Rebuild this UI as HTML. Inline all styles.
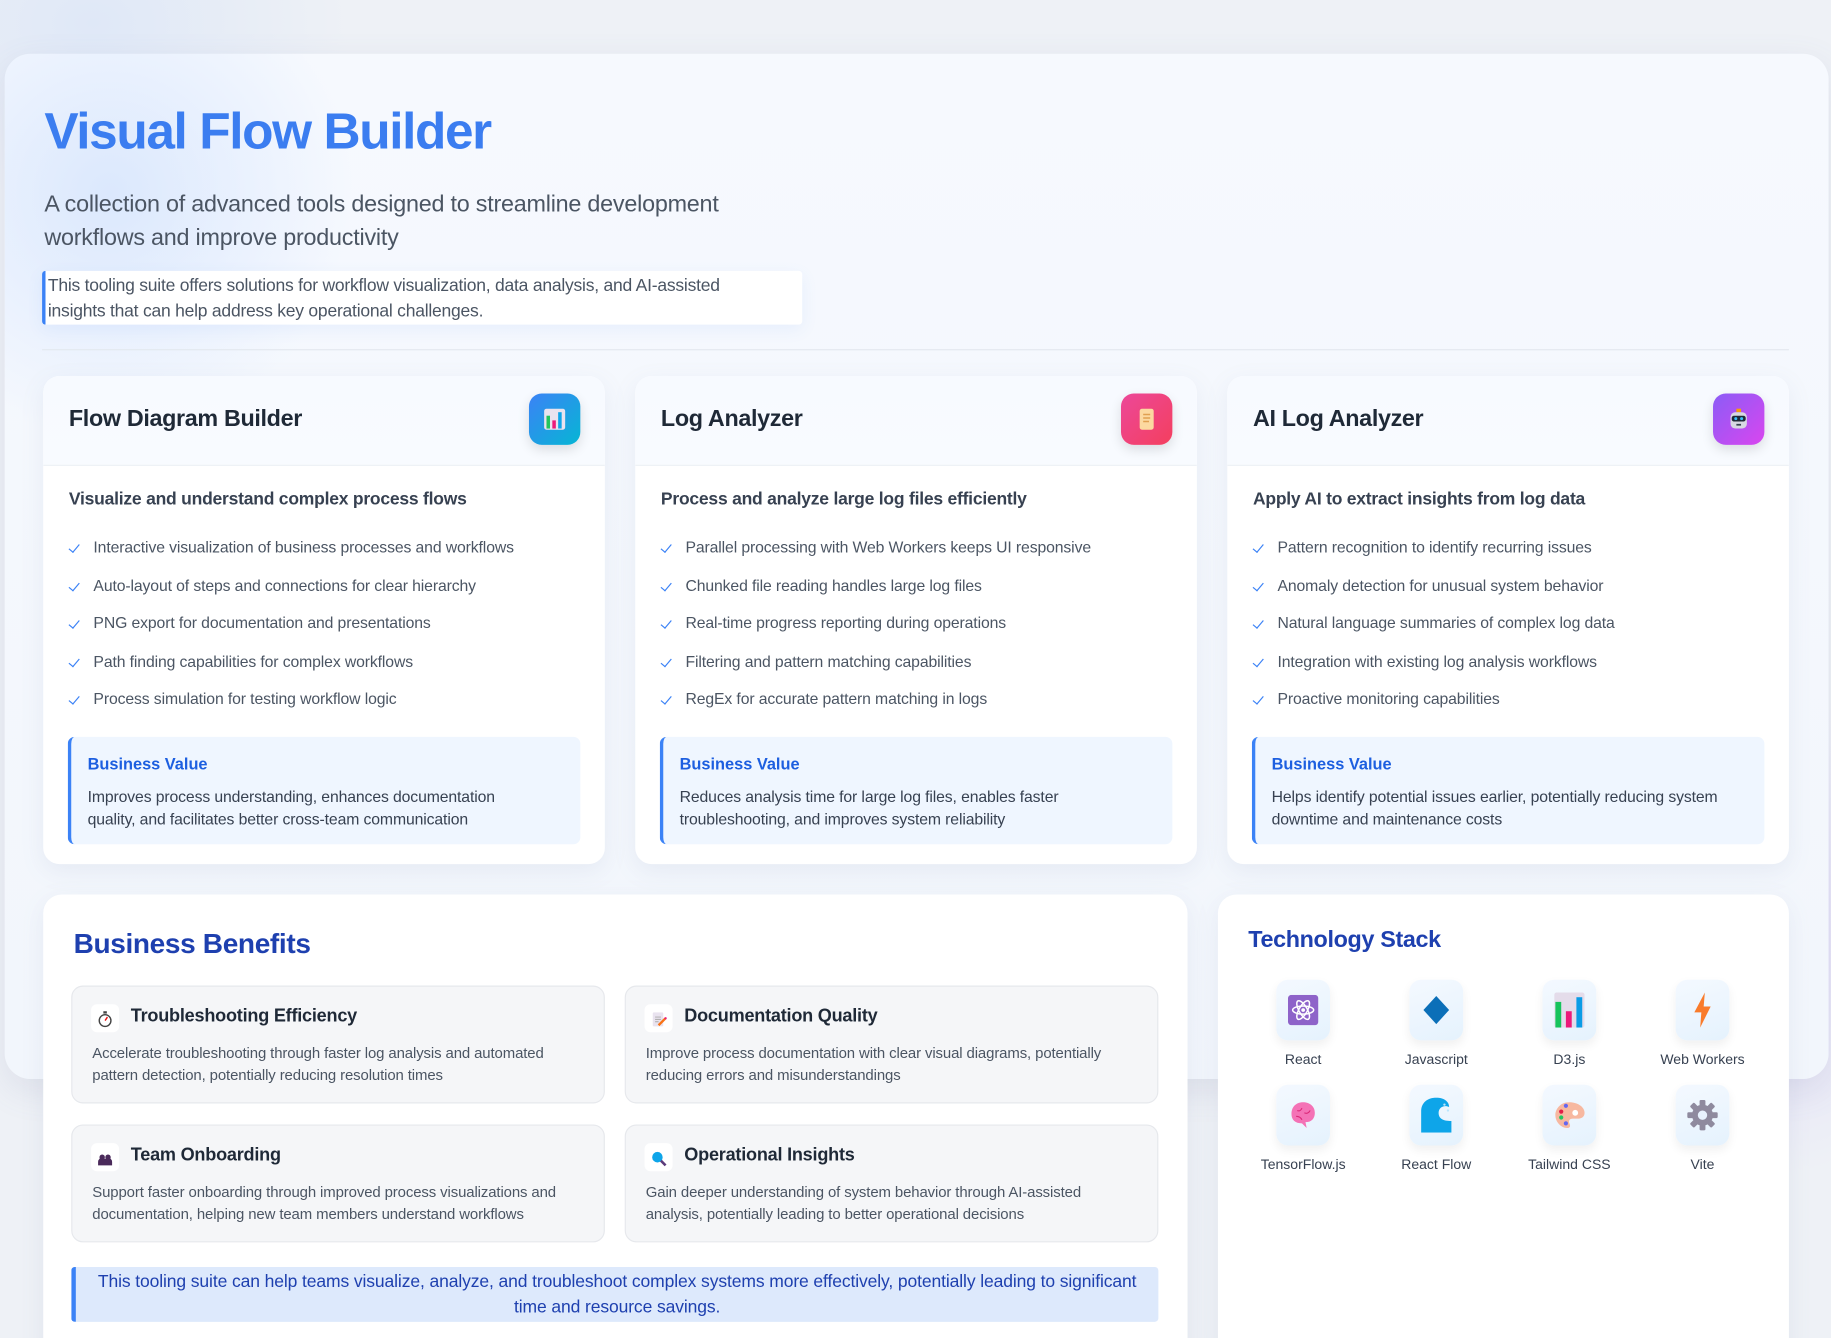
<!DOCTYPE html>
<html><head><meta charset="utf-8"><style>
*{box-sizing:border-box;margin:0;padding:0}
html,body{width:1831px;height:1338px;overflow:hidden;background:#eef1f6;font-family:"Liberation Sans",sans-serif}
#st{position:absolute;left:0;top:0;width:1568px;height:1146px;transform:scale(1.1677);transform-origin:0 0;overflow:hidden;
background:radial-gradient(ellipse 220px 160px at 80px 20px,#dfe8f7,transparent),radial-gradient(ellipse 300px 300px at 1500px 800px,#e2dcf8,transparent 70%),#eef1f6}
.a{position:absolute}
#main{left:4px;top:46px;width:1562px;height:878px;border-radius:22px;background:radial-gradient(circle 260px at 90px 120px,#dbe8fd,transparent 80%),linear-gradient(180deg,#f6f9fe,#f2f6fc);box-shadow:0 10px 30px rgba(100,110,160,.12)}
h1{position:absolute;left:38px;top:88px;font-size:44px;font-weight:700;color:#3b7df0;letter-spacing:-1.2px}
.sub{left:38px;top:161px;font-size:20px;line-height:29px;color:#4b5563;width:650px;letter-spacing:-.2px}
.call{left:36px;top:232px;width:651px;height:46px;background:#fff;border-left:3px solid #3b82f6;border-radius:3px;font-size:15px;line-height:22px;color:#4b5563;padding:2px 30px 0 2px;box-shadow:0 4px 14px rgba(59,130,246,.08);letter-spacing:-.2px}
.hr{left:36px;top:299px;width:1496px;height:1px;background:#e3e8ef}
.card{top:322px;width:481px;height:418px;background:#fff;border-radius:14px;box-shadow:0 6px 20px rgba(120,130,170,.1);overflow:hidden}
.ch{height:77px;background:linear-gradient(180deg,#f7faff,#f8fbff);border-bottom:1px solid #edf1f6;position:relative}
.ch h2{position:absolute;left:22px;top:26px;font-size:20px;font-weight:700;color:#1f2937;letter-spacing:-.3px}
.ic{position:absolute;right:21px;top:15px;width:44px;height:44px;border-radius:11px;box-shadow:0 4px 10px rgba(0,0,0,.12);display:flex;align-items:center;justify-content:center}
.cs{position:absolute;left:22px;top:97px;font-size:15px;font-weight:700;color:#374151;letter-spacing:-.2px}
ul{position:absolute;left:22px;top:139px;list-style:none}
li{font-size:13.5px;color:#4b5563;height:32.6px;padding-left:21px;position:relative;letter-spacing:-.1px}
li:before{content:"";position:absolute;left:2px;top:3px;width:4px;height:8px;border:solid #3b82f6;border-width:0 1.3px 1.3px 0;transform:rotate(40deg)}
.bv{position:absolute;left:21px;top:309px;width:439px;height:92px;background:#eff6ff;border-left:3px solid #3b82f6;border-radius:6px;padding:15px 30px 0 14px}
.bv b{display:block;font-size:14px;color:#1d5fe0;margin-bottom:11px}
.bv p{font-size:13.5px;line-height:19px;color:#374151;letter-spacing:-.1px}
.pan{background:#fff;border-radius:16px;box-shadow:0 6px 20px rgba(120,130,170,.1)}
.bt{font-size:24px;font-weight:700;color:#1e40af;letter-spacing:-.3px}
.bc{width:457px;height:101px;background:#f5f6f8;border:1px solid #e6e8ec;border-radius:10px}
.bi{position:absolute;left:16px;top:15px;width:24px;height:24px;background:#fff;border-radius:5px;display:flex;align-items:center;justify-content:center}
.bc h3{position:absolute;left:50px;top:17px;font-size:15.5px;font-weight:700;color:#1f2937;letter-spacing:-.2px}
.bc p{position:absolute;left:17px;top:48px;font-size:12.8px;line-height:18.5px;color:#4b5563;width:415px;letter-spacing:-.1px}
.fb{left:61px;top:1085px;width:931px;height:47px;background:#dde9fc;border-left:4px solid #3b82f6;border-radius:3px;text-align:center;font-size:15px;line-height:22px;color:#1e40af;padding:2px 14px 0;letter-spacing:-.1px}
.t{width:90px;text-align:center;font-size:12px;color:#374151}
.tb{width:46px;height:52px;margin:0 auto 9px;background:linear-gradient(160deg,#f4f9ff,#e5f2fd);border-radius:10px;box-shadow:0 4px 8px rgba(0,0,0,.06);display:flex;align-items:center;justify-content:center}
</style></head><body><div id="st">
<div class="a" id="main"></div>
<h1>Visual Flow Builder</h1>
<div class="a sub">A collection of advanced tools designed to streamline development workflows and improve productivity</div>
<div class="a call">This tooling suite offers solutions for workflow visualization, data analysis, and AI-assisted insights that can help address key operational challenges.</div>
<div class="a hr"></div>

<div class="a card" style="left:37px"><div class="ch"><h2>Flow Diagram Builder</h2><div class="ic" style="background:linear-gradient(135deg,#3b82f6,#06b6d4)"><svg width="22" height="22" viewBox="0 0 22 22"><rect x="2" y="2" width="18" height="18" rx="2" fill="#e9e3ef"/><rect x="4" y="8" width="3" height="11" fill="#22c55e"/><rect x="9" y="12" width="3" height="7" fill="#ec1a7a"/><rect x="14" y="5" width="3" height="14" fill="#0ea5e9"/></svg></div></div>
<div class="cs">Visualize and understand complex process flows</div>
<ul><li>Interactive visualization of business processes and workflows</li><li>Auto-layout of steps and connections for clear hierarchy</li><li>PNG export for documentation and presentations</li><li>Path finding capabilities for complex workflows</li><li>Process simulation for testing workflow logic</li></ul>
<div class="bv"><b>Business Value</b><p>Improves process understanding, enhances documentation quality, and facilitates better cross-team communication</p></div></div>

<div class="a card" style="left:544px"><div class="ch"><h2>Log Analyzer</h2><div class="ic" style="background:linear-gradient(135deg,#ec4899,#f43f5e)"><svg width="22" height="22" viewBox="0 0 22 22"><rect x="5" y="2" width="12" height="18" rx="2" fill="#fcd9a0"/><path d="M8 7h6M8 10h6M8 13h5" stroke="#e0a050" stroke-width="1.3"/></svg></div></div>
<div class="cs">Process and analyze large log files efficiently</div>
<ul><li>Parallel processing with Web Workers keeps UI responsive</li><li>Chunked file reading handles large log files</li><li>Real-time progress reporting during operations</li><li>Filtering and pattern matching capabilities</li><li>RegEx for accurate pattern matching in logs</li></ul>
<div class="bv"><b>Business Value</b><p>Reduces analysis time for large log files, enables faster troubleshooting, and improves system reliability</p></div></div>

<div class="a card" style="left:1051px"><div class="ch"><h2>AI Log Analyzer</h2><div class="ic" style="background:linear-gradient(135deg,#8b5cf6,#d946ef)"><svg width="22" height="22" viewBox="0 0 22 22"><rect x="9" y="2" width="4" height="3" fill="#f59e0b"/><rect x="4" y="5" width="14" height="14" rx="4" fill="#d8d8e2"/><rect x="5" y="8" width="12" height="5" rx="2" fill="#1f2937"/><circle cx="8.5" cy="10.5" r="1.3" fill="#38bdf8"/><circle cx="13.5" cy="10.5" r="1.3" fill="#38bdf8"/><rect x="9" y="15" width="4" height="1.5" fill="#374151"/></svg></div></div>
<div class="cs">Apply AI to extract insights from log data</div>
<ul><li>Pattern recognition to identify recurring issues</li><li>Anomaly detection for unusual system behavior</li><li>Natural language summaries of complex log data</li><li>Integration with existing log analysis workflows</li><li>Proactive monitoring capabilities</li></ul>
<div class="bv"><b>Business Value</b><p>Helps identify potential issues earlier, potentially reducing system downtime and maintenance costs</p></div></div>

<div class="a pan" style="left:37px;top:766px;width:980px;height:400px"></div>
<div class="a bt" style="left:63px;top:795px">Business Benefits</div>
<div class="a bc" style="left:61px;top:844px"><div class="bi"><svg width="16" height="16" viewBox="0 0 16 16"><circle cx="8" cy="10" r="5" fill="#fff" stroke="#444" stroke-width="1.2"/><rect x="6.5" y="2" width="3" height="2" fill="#444"/><path d="M8 10l2-3" stroke="#e11" stroke-width="1.2"/></svg></div><h3>Troubleshooting Efficiency</h3><p>Accelerate troubleshooting through faster log analysis and automated pattern detection, potentially reducing resolution times</p></div>
<div class="a bc" style="left:535px;top:844px"><div class="bi"><svg width="16" height="16" viewBox="0 0 16 16"><rect x="3" y="3" width="9" height="12" rx="1" fill="#e9e3ef"/><path d="M5 7h5M5 9h5M5 11h3" stroke="#aaa" stroke-width=".8"/><path d="M8 14l6-6" stroke="#f97316" stroke-width="2"/><circle cx="14" cy="8" r="1" fill="#ec1a7a"/></svg></div><h3>Documentation Quality</h3><p>Improve process documentation with clear visual diagrams, potentially reducing errors and misunderstandings</p></div>
<div class="a bc" style="left:61px;top:963px"><div class="bi"><svg width="16" height="16" viewBox="0 0 16 16"><circle cx="5.5" cy="8" r="2.3" fill="#4a2a5a"/><circle cx="10.5" cy="8" r="2.3" fill="#4a2a5a"/><path d="M2 15v-3a3 3 0 0 1 7 0v3zM7 15v-3a3 3 0 0 1 7 0v3z" fill="#4a2a5a"/></svg></div><h3>Team Onboarding</h3><p>Support faster onboarding through improved process visualizations and documentation, helping new team members understand workflows</p></div>
<div class="a bc" style="left:535px;top:963px"><div class="bi"><svg width="16" height="16" viewBox="0 0 16 16"><circle cx="7" cy="8" r="4.5" fill="#0ea5e9"/><path d="M10 11l4 4" stroke="#5b3a7a" stroke-width="2.2"/></svg></div><h3>Operational Insights</h3><p>Gain deeper understanding of system behavior through AI-assisted analysis, potentially leading to better operational decisions</p></div>
<div class="a fb">This tooling suite can help teams visualize, analyze, and troubleshoot complex systems more effectively, potentially leading to significant time and resource savings.</div>

<div class="a pan" style="left:1043px;top:766px;width:489px;height:400px"></div>
<div class="a bt" style="left:1069px;top:794px;font-size:20px">Technology Stack</div>
<div class="a t" style="left:1071px;top:839px"><div class="tb"><svg width="26" height="26" viewBox="0 0 26 26"><rect width="26" height="26" rx="3" fill="#8e63c9"/><g fill="none" stroke="#fff" stroke-width="1.3"><ellipse cx="13" cy="13" rx="9" ry="3.5"/><ellipse cx="13" cy="13" rx="9" ry="3.5" transform="rotate(60 13 13)"/><ellipse cx="13" cy="13" rx="9" ry="3.5" transform="rotate(-60 13 13)"/></g><circle cx="13" cy="13" r="1.6" fill="#fff"/></svg></div>React</div>
<div class="a t" style="left:1185px;top:839px"><div class="tb"><svg width="26" height="26" viewBox="0 0 26 26"><path d="M13 1l11 12-11 12L2 13z" fill="#0b6fb8"/></svg></div>Javascript</div>
<div class="a t" style="left:1299px;top:839px"><div class="tb"><svg width="26" height="30" viewBox="0 0 26 30"><rect x="0" y="0" width="26" height="30" rx="2" fill="#e4dcea"/><rect x="1" y="8" width="5" height="22" fill="#16c45c"/><rect x="10" y="16" width="5" height="14" fill="#ec1a7a"/><rect x="19" y="4" width="5" height="26" fill="#0a9ce6"/></svg></div>D3.js</div>
<div class="a t" style="left:1413px;top:839px"><div class="tb"><svg width="16" height="30" viewBox="0 0 16 30"><path d="M10 0L1 17h6l-1 13 9-18H9z" fill="#f97b2b"/></svg></div>Web Workers</div>
<div class="a t" style="left:1071px;top:929px"><div class="tb"><svg width="28" height="28" viewBox="0 0 28 28"><path d="M4 13c0-7 5-10 10-10s10 3 10 9c0 5-3 8-8 8l1 5-4-4c-6 0-9-3-9-8z" fill="#f472b6"/><path d="M9 10c2 1 3 0 4-2M15 12c2 1 4 0 5-2M8 15c2 0 4 1 5 3" stroke="#db2777" fill="none" stroke-width=".9"/></svg></div>TensorFlow.js</div>
<div class="a t" style="left:1185px;top:929px"><div class="tb"><svg width="26" height="30" viewBox="0 0 26 30"><path d="M0 30V12C0 4 6 0 13 0c6 0 11 3 11 8-4-2-9 0-9 5s4 7 11 7v10z" fill="#0ea5e9"/><circle cx="20" cy="6" r="1" fill="#bae6fd"/><circle cx="23" cy="11" r="1" fill="#bae6fd"/></svg></div>React Flow</div>
<div class="a t" style="left:1299px;top:929px"><div class="tb"><svg width="28" height="28" viewBox="0 0 28 28"><path d="M14 3C6 3 2 9 2 14c0 6 5 11 10 11 3 0 3-2 2-4s0-4 3-4h4c4 0 6-2 6-5 0-5-6-9-13-9z" fill="#f7b8a0"/><circle cx="19" cy="12" r="2.5" fill="#fff"/><circle cx="7" cy="11" r="1.8" fill="#e11d48"/><circle cx="11" cy="6" r="1.8" fill="#6366f1"/><circle cx="7" cy="16" r="1.8" fill="#22c55e"/><circle cx="11" cy="21" r="1.8" fill="#6366f1"/></svg></div>Tailwind CSS</div>
<div class="a t" style="left:1413px;top:929px"><div class="tb"><svg width="28" height="28" viewBox="0 0 28 28"><g fill="#8f8a9e"><circle cx="14" cy="14" r="9"/><g id="tt"><rect x="11.5" y="1" width="5" height="6" rx="1"/><rect x="11.5" y="21" width="5" height="6" rx="1"/></g><use href="#tt" transform="rotate(45 14 14)"/><use href="#tt" transform="rotate(90 14 14)"/><use href="#tt" transform="rotate(135 14 14)"/></g><circle cx="14" cy="14" r="4" fill="#e8f2fd"/></svg></div>Vite</div>
</div></body></html>
